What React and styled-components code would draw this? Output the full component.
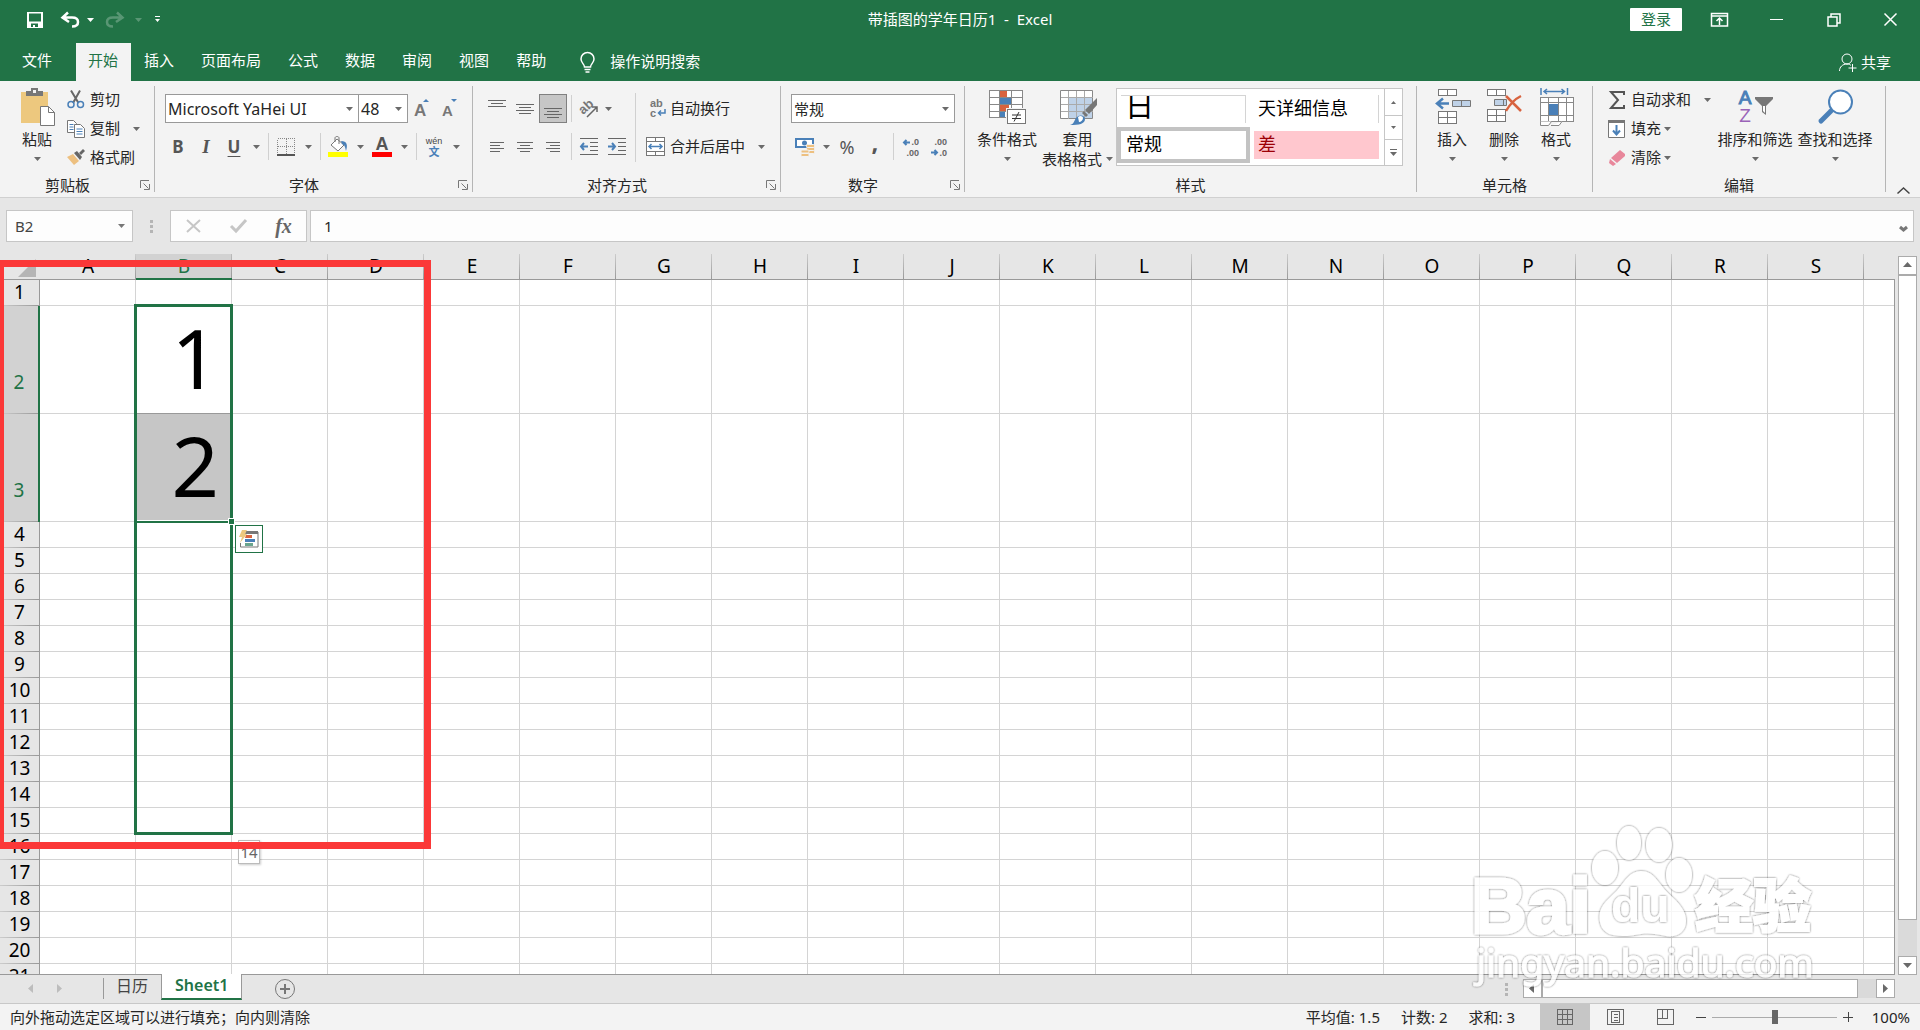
import React from "react";
import styled, { createGlobalStyle, css } from "styled-components";

const GREEN = "#217346";
const FONT = '"Noto Sans", "Noto Sans CJK SC", sans-serif';
const ICON_FONT = '"Liberation Sans", sans-serif';

const GlobalStyle = createGlobalStyle`
  * { box-sizing: border-box; }
  html, body { margin: 0; height: 100%; }
  body { font-family: ${FONT}; font-size: 15px; line-height: 20px; color: #262626; }
  svg { overflow: visible; }
  button, input, select { font: inherit; color: inherit; margin: 0; }
  button { border: 0; padding: 0; background: none; white-space: nowrap; }
`;

const Page = styled.div`
  position: relative;
  display: flex;
  flex-direction: column;
  height: 100vh;
  overflow: hidden;
  background: #e6e6e6;
`;

/* ---------- title bar and tabs ---------- */
const TitleBar = styled.header`
  display: grid;
  grid-template-columns: 1fr auto 1fr;
  height: 43px;
  padding-bottom: 4px;
  align-items: center;
  background: ${GREEN};
  color: #fff;
`;
const Title = styled.span`
  padding-bottom: 2px;
`;
const QuickAccess = styled.div`
  display: flex;
  align-items: center;
  padding-left: 19px;
`;
const QuickButton = styled.button`
  display: flex;
  justify-content: center;
  align-items: center;
  width: ${(p) => p.$w || 32}px;
  height: 32px;
  margin-left: ${(p) => p.$gap || 0}px;
  opacity: ${(p) => (p.disabled ? 0.25 : 1)};
`;
const WindowTools = styled.div`
  display: flex;
  justify-content: flex-end;
  align-items: center;
  padding-right: 1px;
`;
const SignIn = styled.button`
  width: 52px;
  height: 23px;
  margin-right: 9px;
  padding-bottom: 1px;
  border-radius: 1px;
  background: #fff;
  color: ${GREEN};
`;
const WindowButton = styled.button`
  display: grid;
  place-items: center;
  width: 57px;
  height: 36px;
`;
const TabRow = styled.nav`
  display: flex;
  height: 38px;
  background: ${GREEN};
  color: #fff;
`;
const Tab = styled.button`
  padding: 0 14px 4px 13px;
  ${(p) => p.$file && css`padding: 0 24px 4px 22px;`}
  ${(p) =>
    p.$active &&
    css`
      padding: 0 13px 4px 12px;
      background: #f3f3f3;
      color: ${GREEN};
    `}
`;
const TellMe = styled.button`
  display: flex;
  align-items: center;
  gap: 15px;
  margin-left: 20px;
`;
const Share = styled.button`
  display: flex;
  align-items: center;
  gap: 4px;
  margin: 0 29px 0 auto;
`;
const Label = styled.span`
  padding-bottom: 2px;
`;

/* ---------- ribbon ---------- */
const Ribbon = styled.section`
  display: flex;
  height: 117px;
  background: #f3f3f3;
  border-bottom: 1px solid #d0d0d0;
`;
const GroupBox = styled.div`
  display: flex;
  flex-direction: column;
  flex: 0 0 ${(p) => p.$w}px;
  padding-top: 4px;
`;
const GroupBody = styled.div`
  display: flex;
  height: 87px;
  padding-left: ${(p) => p.$left || 0}px;
`;
const GroupFoot = styled.div`
  display: flex;
  align-items: center;
  height: 25px;
`;
const GroupLabel = styled.div`
  flex: 1;
  text-align: center;
`;
const Launcher = styled.button`
  display: grid;
  place-items: center;
  width: 19px;
  height: 20px;
`;
const Divider = styled.div`
  width: 1px;
  margin: 5px 0;
  background: #b5b5b5;
`;
const Collapse = styled.button`
  display: grid;
  place-items: center;
  align-self: flex-end;
  margin: 0 10px 0 auto;
  width: 14px;
  height: 14px;
`;
const BigButton = styled.button`
  display: flex;
  flex-direction: column;
  align-items: center;
  width: ${(p) => p.$w || 52}px;
`;
const BigIcon = styled.span`
  display: grid;
  place-items: center;
  height: 44px;
  padding-left: 2px;
`;
const BigLine = styled.span`
  display: flex;
  align-items: center;
  justify-content: center;
  gap: 4px;
  height: 20px;
`;
const Stack = styled.div`
  display: flex;
  flex-direction: column;
  padding-left: ${(p) => p.$left || 0}px;
  padding-right: ${(p) => p.$right || 0}px;
  padding-top: ${(p) => p.$top || 0}px;
  gap: ${(p) => p.$gap || 0}px;
`;
const Line = styled.div`
  display: flex;
  align-items: center;
  height: 29px;
  padding-left: ${(p) => p.$left || 0}px;
`;
const TextButton = styled.button`
  display: flex;
  align-items: center;
  height: 29px;
  gap: 5px;
`;
const IconSlot = styled.span`
  display: grid;
  place-items: center;
  width: ${(p) => p.$w || 18}px;
`;
const ArrowGap = styled.span`
  display: flex;
  margin-left: ${(p) => p.$gap}px;
`;
const Tool = styled.button`
  display: grid;
  place-items: center;
  width: 28px;
  height: 29px;
  color: #444;
  ${(p) =>
    p.$on &&
    css`
      background: #c6c6c6;
      border: 1px solid #808080;
    `}
`;
const Letter = styled.span`
  font-family: ${(p) => (p.$serif ? '"Liberation Serif", serif' : FONT)};
  font-size: ${(p) => (p.$serif ? 19 : 17)}px;
  line-height: 20px;
  font-weight: 700;
  color: #555;
  font-style: ${(p) => (p.$serif ? "italic" : "normal")};
  text-decoration: ${(p) => (p.$under ? "underline" : "none")};
  text-underline-offset: 3px;
`;
const ArrowTool = styled.button`
  display: grid;
  place-items: center;
  width: ${(p) => p.$w || 16}px;
  height: 29px;
`;
const MiniSep = styled.span`
  width: 1px;
  height: 27px;
  margin: 0 3px 0 4px;
  background: #d0d0d0;
`;
const TallSep = styled.span`
  width: 1px;
  height: 69px;
  margin: 8px 3px 0 4px;
  background: #d0d0d0;
`;
const SelectWrap = styled.label`
  position: relative;
  width: ${(p) => p.$w}px;
  height: 29px;
  margin-left: ${(p) => p.$ml || 0}px;
  svg {
    position: absolute;
    right: 6px;
    top: 13px;
    pointer-events: none;
  }
`;
const Select = styled.select`
  appearance: none;
  width: 100%;
  height: 100%;
  padding: 0 2px;
  border: 1px solid #999;
  border-radius: 0;
  background: #fff;
  font-size: ${(p) => p.$size || 15}px;
`;
const Glyph = styled.span`
  padding-bottom: ${(p) => p.$lift || 0}px;
  font-size: ${(p) => p.$size || 18}px;
  line-height: 20px;
  color: #555;
  font-weight: ${(p) => p.$weight || 400};
`;

/* style gallery */
const Gallery = styled.div`
  display: flex;
  width: 287px;
  height: 78px;
  margin: 3px 0 0 2px;
  border: 1px solid #c6c6c6;
  background: #fff;
`;
const GalleryItems = styled.div`
  display: grid;
  grid-template-columns: 133px 133px;
  grid-template-rows: 36px 36px;
  padding-top: 2px;
`;
const GalleryCell = styled.button`
  display: flex;
  align-items: center;
  margin: ${(p) => (p.$picked ? 0 : 4)}px;
  padding: 0 0 2px ${(p) => (p.$picked ? 5 : 4)}px;
  overflow: hidden;
  color: #000;
  font-size: 18px;
  ${(p) => p.$picked && css`border: 4px solid #c3c3c3;`}
  ${(p) => p.$bad && css`background: #ffc7ce; color: #9c0006;`}
  ${(p) => p.$edge && css`border-right: 1px solid #d4d4d4;`}
  ${(p) =>
    p.$day &&
    css`
      padding-bottom: 8px;
      border-top: 1px solid #d4d4d4;
      font-size: 29px;
      line-height: 20px;
    `}
`;
const GalleryScroll = styled.div`
  display: grid;
  grid-template-rows: 26px 24px 26px;
  width: 18px;
  margin-left: auto;
  border-left: 1px solid #c6c6c6;
  button { display: grid; place-items: center; }
  button + button { border-top: 1px solid #c6c6c6; }
`;

/* ---------- formula bar ---------- */
const FormulaBar = styled.section`
  display: flex;
  height: 56px;
  padding: 12px 6px;
`;
const NameBox = styled.label`
  position: relative;
  width: 127px;
  height: 32px;
  margin-right: 17px;
  svg { position: absolute; right: 8px; top: 14px; }
`;
const NameInput = styled.input`
  width: 100%;
  height: 100%;
  padding: 0 8px;
  border: 1px solid #c6c6c6;
  background: #fdfdfd;
  color: #444;
`;
const Dots = styled.span`
  display: flex;
  flex-direction: column;
  justify-content: center;
  gap: 2px;
  width: 3px;
  i { width: 3px; height: 3px; background: #b5b5b5; }
`;
const FormulaTools = styled.div`
  display: flex;
  align-items: center;
  width: 137px;
  height: 32px;
  margin: 0 3px 0 17px;
  border: 1px solid #c6c6c6;
  background: #fdfdfd;
  button { display: grid; place-items: center; flex: 1; height: 30px; }
`;
const Fx = styled.span`
  font-family: "Liberation Serif", serif;
  font-style: italic;
  font-weight: 700;
  font-size: 20px;
  color: #666;
`;
const FormulaField = styled.div`
  display: flex;
  flex: 1;
  height: 32px;
  border: 1px solid #c6c6c6;
  background: #fdfdfd;
  button { width: 20px; }
`;
const FormulaInput = styled.input`
  flex: 1;
  padding: 0 13px;
  border: 0;
  background: none;
`;

/* ---------- sheet ---------- */
const SheetArea = styled.main`
  display: flex;
  flex: 1;
  min-height: 0;
`;
const Viewport = styled.div`
  position: relative;
  flex: 1;
  min-width: 0;
  overflow: hidden;
  border-bottom: 1px solid #999;
`;
const EdgeLine = styled.span`
  width: 1px;
  margin-top: 25px;
  background: #999;
`;
const Grid = styled.table`
  table-layout: fixed;
  width: 1960px;
  border-collapse: separate;
  border-spacing: 0;
  font-size: 19px;
  line-height: 25px;
  color: #000;
  background: #fff;
`;
const Corner = styled.th`
  width: 40px;
  height: 26px;
  padding: 0;
  background: #e6e6e6;
  border-bottom: 1px solid #999;
  svg { display: block; margin: 4px 0 2px 18px; }
`;
const ColHead = styled.th`
  height: 26px;
  padding: 0;
  font-weight: 400;
  background: linear-gradient(#ccc, #999) right / 1px 100% no-repeat, #e6e6e6;
  border-bottom: 1px solid #999;
  ${(p) =>
    p.$on &&
    css`
      background: linear-gradient(#bbb, #999) right / 1px 100% no-repeat, #d2d2d2;
      border-bottom: 2px solid ${GREEN};
      line-height: 24px;
      color: ${GREEN};
    `}
`;
const RowHead = styled.th`
  height: ${(p) => (p.$tall ? 108 : 26)}px;
  padding: 0 0 2px;
  vertical-align: bottom;
  font-weight: 400;
  line-height: 24px;
  background: linear-gradient(90deg, #ccc, #999) bottom / 100% 1px no-repeat, #e6e6e6;
  border-right: 1px solid #999;
  ${(p) =>
    p.$tall &&
    css`
      padding-bottom: 20px;
      background-color: #d2d2d2;
      border-right: 2px solid ${GREEN};
      color: ${GREEN};
    `}
`;
const Cell = styled.td`
  padding: 0;
  border-right: 1px solid #d4d4d4;
  border-bottom: 1px solid #d4d4d4;
  ${(p) =>
    p.$big &&
    css`
      padding-right: 12px;
      text-align: right;
      vertical-align: top;
      font-size: 83px;
      line-height: 102px;
      border-bottom-color: #999;
    `}
  ${(p) => p.$shade && css`background: #c6c6c6;`}
`;
const FillOutline = styled.div`
  position: absolute;
  left: 134px;
  top: 50px;
  width: 99px;
  height: 531px;
  border: 3px solid ${GREEN};
`;
const SelectionEdge = styled.div`
  position: absolute;
  left: 137px;
  top: 266px;
  width: 91px;
  height: 3px;
  border-top: 1px solid #fff;
  background: ${GREEN};
`;
const FillHandle = styled.div`
  position: absolute;
  left: 228px;
  top: 264px;
  width: 7px;
  height: 7px;
  border: 1px solid #fff;
  background: ${GREEN};
`;
const QuickAnalysis = styled.button`
  position: absolute;
  left: 235px;
  top: 271px;
  display: grid;
  place-items: center;
  width: 28px;
  height: 28px;
  border: 1px solid ${GREEN};
  background: #fff;
`;
const FillTip = styled.div`
  position: absolute;
  left: 238px;
  top: 586px;
  width: 22px;
  height: 24px;
  border: 1px solid #bbb;
  background: #fff;
  box-shadow: 1px 1px 2px rgba(0, 0, 0, 0.2);
  font-size: 15px;
  line-height: 22px;
  text-align: center;
  color: #666;
`;
const RedFrame = styled.div`
  position: absolute;
  left: -3px;
  top: 6px;
  width: 434px;
  height: 589px;
  border: 7px solid #fb3838;
`;
const VScroll = styled.div`
  display: flex;
  flex-direction: column;
  width: 19px;
  margin: 2px 3px 0;
`;
const HScroll = styled.div`
  display: flex;
  width: 372px;
  height: 19px;
  margin: 4px 25px 0 15px;
`;
const ScrollButton = styled.button`
  display: grid;
  place-items: center;
  flex: 0 0 19px;
  border: 1px solid #ababab;
  background: #fff;
`;
const ScrollThumb = styled.div`
  flex: 1;
  border: 1px solid #ababab;
  background: #fff;
`;
const ScrollTrack = styled.div`
  flex: 0 0 ${(p) => p.$size}px;
  background: #dadada;
`;

/* ---------- sheet tabs and status ---------- */
const SheetBar = styled.nav`
  position: relative;
  display: flex;
  height: 28px;
`;
const SheetNav = styled.div`
  display: flex;
  padding: 0 30px 0 17px;
  button { display: grid; place-items: center; width: 28px; height: 26px; }
`;
const SheetSep = styled.span`
  width: 1px;
  height: 21px;
  margin-top: 3px;
  background: #999;
`;
const SheetTab = styled.button`
  height: 25px;
  padding: 0 13px 4px 12px;
  font-size: 16px;
  color: #444;
  ${(p) =>
    p.$active &&
    css`
      height: 26px;
      padding: 0 13px 2px;
      margin-top: -1px;
      background: #fff;
      border: solid #999;
      border-width: 0 1px;
      border-bottom: 2px solid ${GREEN};
      font-weight: 600;
      color: ${GREEN};
    `}
`;
const AddSheet = styled.button`
  display: grid;
  place-items: center;
  width: 22px;
  margin: 0 auto 0 32px;
`;
const StatusBar = styled.footer`
  display: flex;
  align-items: center;
  height: 27px;
  padding: 0 10px;
  background: #f3f3f3;
  border-top: 1px solid #c8c8c8;
`;
const Stats = styled.div`
  display: flex;
  gap: 21px;
  margin: 0 25px 0 auto;
`;
const ViewButton = styled.button`
  display: grid;
  place-items: center;
  width: 50px;
  height: 26px;
  background: ${(p) => (p.$on ? "#c6c6c6" : "none")};
`;
const ZoomButton = styled.button`
  display: grid;
  place-items: center;
  width: 22px;
  height: 26px;
`;
const ZoomRange = styled.input`
  appearance: none;
  width: 125px;
  height: 16px;
  background: linear-gradient(#ababab, #ababab) center / 100% 1px no-repeat;
  &::-webkit-slider-thumb {
    appearance: none;
    width: 6px;
    height: 14px;
    background: #666;
  }
`;
const ZoomValue = styled.span`
  margin-left: auto;
`;
const ZoomBox = styled.div`
  display: flex;
  align-items: center;
  width: 220px;
`;
const Watermark = styled.svg`
  position: absolute;
  right: 94px;
  bottom: 38px;
  pointer-events: none;
`;

/* ---------- drawings ---------- */
const Down = ({ c = "#6a6a6a" }) => (
  <svg width="7" height="4" viewBox="0 0 7 4"><path d="M0 0h7L3.500 4z" fill={c} /></svg>
);
const Tri = ({ dir, c = "#6a6a6a" }) => {
  const d = { up: "M0 6h9L4.500 1z", down: "M0 2h9L4.500 7z", left: "M6 0v9L1 4.500z", right: "M2 0v9L7 4.500z" }[dir];
  return <svg width="9" height="9" viewBox="0 0 9 9"><path d={d} fill={c} /></svg>;
};
const Lines = ({ rows }) => (
  <svg width="20" height="20" viewBox="0 0 20 20" shapeRendering="crispEdges">
    {rows.map(([x, y, w]) => <rect key={y} x={x} y={y} width={w} height="1" fill="#666" />)}
  </svg>
);
const SaveIcon = () => (
  <svg width="16" height="16" viewBox="0 0 16 16"><path fill="#fff" fillRule="evenodd" d="M0 0h16v16H0zM2 1.500v8h12v-8zM4 11.500V15h2v-2h2v2h3v-3.500z" /></svg>
);
const UndoIcon = ({ flip }) => (
  <svg width="19" height="16" viewBox="0 0 19 16">
    <path d="M7 0.500L1.500 5.500 8 10M2 5.500h9c4 0 6 2 6 4.500S15 14.500 11 14.500" fill="none" stroke="#fff" strokeWidth="2.500" transform={flip ? "matrix(-1 0 0 1 19 0)" : undefined} />
  </svg>
);
const PasteIcon = () => (
  <svg width="36" height="40" viewBox="0 0 36 40">
    <path d="M1 5h27v31H1z" fill="#edc87e" />
    <path d="M6 9V4h5V1h7v3h5v5z" fill="#777" /><path d="M13 3h3v3h-3z" fill="#f3f3f3" />
    <path d="M20.500 19.500h8l6 6v13h-14z" fill="#fff" stroke="#777" /><path d="M28.500 19.500v6h6" fill="none" stroke="#777" />
  </svg>
);
const CutIcon = () => (
  <svg width="18" height="19" viewBox="0 0 18 19" fill="none">
    <path d="M4 0.500L11.500 13M13 0.500L6 13" stroke="#666" strokeWidth="2" />
    <circle cx="4" cy="14.500" r="3" stroke="#4a80b8" strokeWidth="1.500" /><circle cx="13.500" cy="14.500" r="3" stroke="#4a80b8" strokeWidth="1.500" />
  </svg>
);
const CopyIcon = () => (
  <svg width="18" height="18" viewBox="0 0 18 18" fill="#fff" stroke="#777">
    <path d="M.5.500h6l3 3v9h-9z" /><path d="M2.500 4.500h4M2.500 7h4M2.500 9.500h4" stroke="#4a80b8" />
    <path d="M7.500 4.500h6l4 4v9h-10z" /><path d="M9.500 9h6M9.500 11.500h6M9.500 14h6" stroke="#4a80b8" />
  </svg>
);
const BrushIcon = () => (
  <svg width="18" height="17" viewBox="0 0 18 17">
    <path d="M0 8l6-3 6 7-5 4z" fill="#edc080" /><path d="M7 4l3-2 5 6-2 3z" fill="#666" /><path d="M12 4l4-4 2 2-4 4z" fill="#666" />
  </svg>
);
const LaunchIcon = () => (
  <svg width="10" height="10" viewBox="0 0 10 10" fill="none" stroke="#777"><path d="M.5 8V.5H9M3.500 3.500l5 5M9.500 4v5.500H4" /></svg>
);
const SizeIcon = ({ up }) => (
  <svg width="16" height="22" viewBox="0 0 16 22">
    <text x="0" y="18" fontFamily={ICON_FONT} fontSize={up ? 17 : 15} fontWeight="700" fill="#777">A</text>
    <path d={up ? "M9 4h6L12 1z" : "M9 1h6l-3 3z"} fill="#4a80b8" />
  </svg>
);
const BorderIcon = () => (
  <svg width="18" height="18" viewBox="0 0 18 18" fill="none" shapeRendering="crispEdges">
    <path d="M.5.500h17v16H.5zM9 .5v16M.5 8.500h17" stroke="#888" strokeDasharray="1 1" /><path d="M0 17h18" stroke="#555" strokeWidth="1.500" />
  </svg>
);
const BucketIcon = () => (
  <svg width="20" height="21" viewBox="0 0 20 21">
    <path d="M9 3l7 6-6 6-7-6z" fill="#fff" stroke="#777" /><path d="M7 6V2c0-2 4-2 4 0v6" fill="none" stroke="#777" />
    <path d="M13 5c6 0 7 4 5 10-1-4-1-6-4-7z" fill="#4a80b8" /><rect y="16" width="20" height="5" fill="#ff0" />
  </svg>
);
const FontColorIcon = () => (
  <svg width="20" height="21" viewBox="0 0 20 21">
    <text x="10" y="14" textAnchor="middle" fontFamily={ICON_FONT} fontSize="18" fontWeight="700" fill="#555">A</text><rect y="16" width="20" height="5" fill="red" />
  </svg>
);
const PhoneticIcon = () => (
  <svg width="20" height="20" viewBox="0 0 20 20">
    <text x="10" y="7" textAnchor="middle" fontFamily={ICON_FONT} fontSize="9" fill="#444">wén</text>
    <text x="10" y="19" textAnchor="middle" fontSize="11" fontWeight="700" fill="#4a80b8">文</text>
  </svg>
);
const OrientIcon = () => (
  <svg width="20" height="18" viewBox="0 0 20 18">
    <text x="1" y="13" fontFamily={ICON_FONT} fontSize="13" fontWeight="700" fill="#777" transform="rotate(-42 5 10)">ab</text>
    <path d="M8 17L18 7M13 7h5v5" fill="none" stroke="#666" strokeWidth="1.500" />
  </svg>
);
const IndentIcon = ({ out }) => (
  <svg width="18" height="17" viewBox="0 0 18 17">
    <path d="M0 .5h18M10 4.500h8M10 8.500h8M10 12.500h8M0 16.500h18" stroke="#666" fill="none" shapeRendering="crispEdges" />
    <path d={out ? "M8 8.500H1M4 5L1 8.500 4 12" : "M0 8.500h7M4 5l3 3.500L4 12"} stroke="#4a80b8" strokeWidth="2" fill="none" />
  </svg>
);
const WrapIcon = () => (
  <svg width="18" height="19" viewBox="0 0 18 19" fontFamily={ICON_FONT} fontSize="11" fontWeight="700">
    <text x="3" y="8" fill="#777">ab</text><text x="3" y="18" fill="#777">c</text>
    <path d="M18 10v4h-6M14 11.500L11.500 14l2.500 2.500" fill="none" stroke="#4a80b8" strokeWidth="1.500" />
  </svg>
);
const MergeIcon = () => (
  <svg width="19" height="19" viewBox="0 0 19 19" fill="#fff" stroke="#777">
    <path d="M.5.500h18v18H.5zM.5 4.500h18M.5 14.500h18M9.500.5v4M9.500 14.500v4" shapeRendering="crispEdges" />
    <path d="M3 9.500h13M5.500 7L3 9.500 5.500 12M13.500 7L16 9.500 13.500 12" fill="none" stroke="#4a80b8" strokeWidth="1.500" />
  </svg>
);
const CurrencyIcon = () => (
  <svg width="20" height="20" viewBox="0 0 20 20">
    <path d="M0 1h19v10H0z" fill="#4a80b8" /><path d="M2 3h15v6H2z" fill="#fff" /><circle cx="9.500" cy="6" r="2.500" fill="#4a80b8" />
    <g fill="#edc080" stroke="#f3f3f3"><rect x="11.500" y="7.500" width="8" height="3" rx="1" /><rect x="11.500" y="10.500" width="8" height="3" rx="1" /><rect x="11.500" y="13.500" width="8" height="3" rx="1" /><rect x="6" y="13" width="8" height="3" rx="1" /><rect x="6" y="16.500" width="8" height="3" rx="1" /></g>
  </svg>
);
const DecimalIcon = ({ more }) => (
  <svg width="18" height="18" viewBox="0 0 18 18" fontFamily={ICON_FONT} fontSize="9" fontWeight="700" fill="#666" textAnchor="end">
    <text x="17" y="7">{more ? ".0" : ".00"}</text>
    <text x="17" y="18">{more ? ".00" : ".0"}</text>
    <path d={more ? "M8 4.500H2M4.500 2L2 4.500 4.500 7" : "M1 14.500h6M4.500 12L7 14.500 4.500 17"} fill="none" stroke="#4a80b8" strokeWidth="2" />
  </svg>
);
const CondIcon = () => (
  <svg width="38" height="35" viewBox="0 0 38 35" shapeRendering="crispEdges">
    <path d="M.5.500h33v27H.5zM.5 7.500h33M.5 14.500h33M.5 21.500h33M10.500.5v27M22.500.5v27" fill="#fff" stroke="#888" />
    <path d="M11 1h7v6h-7zM11 15h9v6h-9z" fill="#d8633f" /><path d="M11 8h11v6H11zM11 22h5v5h-5z" fill="#4a80b8" />
    <path d="M17 18h21v17H17z" fill="#f3f3f3" /><path d="M18.500 19.500h18v14h-18z" fill="#fff" stroke="#777" />
    <path d="M23 25h9M23 28.500h9M30 22l-5 9.500" stroke="#333" shapeRendering="auto" />
  </svg>
);
const TableIcon = () => (
  <svg width="38" height="35" viewBox="0 0 38 35">
    <path d="M.5.500h32v28H.5z" fill="#fff" stroke="#888" /><path d="M9 8h23v20H9z" fill="#bfd2e8" />
    <path d="M.5 7.500h32M.5 14.500h32M.5 21.500h32M8.500.5v28M16.500.5v28M24.500.5v28" stroke="#aaa" fill="none" shapeRendering="crispEdges" />
    <path d="M37 8v7l-8 9-4-4z" fill="#777" /><path d="M24 21l4 4-2 2-4-4z" fill="#777" />
    <path d="M10 35c4-1 4-4 6-7 3-4 9-3 9 1 0 5-6 6-15 6z" fill="#4a80b8" /><path d="M18 27c2-2 5-1 5 1s-2 4-4 4z" fill="#fff" />
  </svg>
);
const InsertIcon = () => (
  <svg width="37" height="36" viewBox="0 0 37 36" fill="#fff" stroke="#777">
    <path d="M3.500.5h18v6h-18zM12.500.5v6M3.500 22.500h18v12h-18zM12.500 22.500v12M3.500 28.500h18" shapeRendering="crispEdges" />
    <path d="M17.500 11.500h18v6h-18zM26.500 11.500v6" fill="#bfd2e8" /><path d="M14 14.500H2M8 9.500l-6 5 6 5" fill="none" stroke="#4a80b8" strokeWidth="2.500" />
  </svg>
);
const DeleteIcon = () => (
  <svg width="36" height="36" viewBox="0 0 36 36" fill="#fff" stroke="#777">
    <path d="M.5.500h18v6H.5zM9.500.5v6M.5 20.500h18v12H.5zM9.500 20.500v12M.5 26.500h18" shapeRendering="crispEdges" />
    <path d="M7.500 10.500h12v6h-12zM16.500 10.500v6" fill="#bfd2e8" /><path d="M19 7l15 15M34 7c-6 3-11 8-15 15" fill="none" stroke="#d8633f" strokeWidth="2.500" />
  </svg>
);
const FormatIcon = () => (
  <svg width="35" height="38" viewBox="0 0 35 38" fill="#fff" stroke="#888">
    <path d="M.5 9.500h33v24H.5zM.5 14.500h33M.5 27.500h33M8.500 9.500v24M18.500 9.500v24M26.500 9.500v24" shapeRendering="crispEdges" />
    <path d="M9 16h9v11H9z" fill="#4a80b8" stroke="none" /><path d="M.5 33.500v4h8l3-4M11 37.500h8l3-4" fill="#fff" />
    <path d="M1 0v7M27.500 0v7M4 3.500h20M7 1L4 3.500 7 6M21.500 1l3 2.500-3 2.500" fill="none" stroke="#4a80b8" strokeWidth="1.500" />
  </svg>
);
const SumIcon = () => (
  <svg width="16" height="18" viewBox="0 0 16 18"><path d="M15 4V1H2l7 8-7 8h13v-3" fill="none" stroke="#555" strokeWidth="2" /></svg>
);
const FillIcon = () => (
  <svg width="18" height="18" viewBox="0 0 18 18"><path d="M.5.500h16v17H.5z" fill="#fff" stroke="#777" /><path d="M0 0h17v3H0z" fill="#777" /><path d="M8.500 5v9M5 10.500l3.500 4 3.500-4" fill="none" stroke="#4a80b8" strokeWidth="2" /></svg>
);
const EraserIcon = () => (
  <svg width="17" height="16" viewBox="0 0 17 16"><path d="M11 0l5 4v2l-8 7-6-5z" fill="#e8879b" /><path d="M1 9l6 5-3 2-4-3z" fill="#e8879b" /></svg>
);
const SortIcon = () => (
  <svg width="36" height="36" viewBox="0 0 36 36" fontFamily={ICON_FONT} fontSize="19" textAnchor="middle">
    <text x="7" y="15" fill="#4a80b8" stroke="#4a80b8">A</text>
    <text x="7" y="33" fill="#9a63b8">Z</text>
    <path d="M17 8h18v2l-7 7v9l-4-3v-6l-7-7z" fill="#777" /><path d="M25 17h2v7l-2-2z" fill="#fff" />
  </svg>
);
const FindIcon = () => (
  <svg width="36" height="36" viewBox="0 0 36 36"><path d="M13 22L3 32" stroke="#4a80b8" strokeWidth="5" strokeLinecap="round" /><circle cx="22.500" cy="13" r="11.500" fill="#fff" stroke="#4a80b8" strokeWidth="2" /></svg>
);
const PawMark = () => (
  <Watermark width="354" height="176" viewBox="0 0 354 176" aria-hidden="true">
    <defs>
      <filter id="glow" x="-10%" y="-10%" width="120%" height="120%">
        <feDropShadow dx="0" dy="0" stdDeviation="1" floodColor="#000" floodOpacity="0.750" />
      </filter>
    </defs>
    <g fill="#fff" opacity="0.800" filter="url(#glow)">
      <text x="-1" y="117" fontFamily="Liberation Sans, sans-serif" fontWeight="700" fontSize="77" stroke="#fff" strokeWidth="3">Bai</text>
      <ellipse cx="133" cy="52" rx="13" ry="17" /><ellipse cx="157" cy="27" rx="12" ry="17" />
      <ellipse cx="187" cy="29" rx="13" ry="17" /><ellipse cx="207" cy="59" rx="13" ry="17" />
      <path d="M169 55c13 0 17 12 27 22 12 11 18 18 18 28 0 11-9 17-20 15-9-2-17-3-25-2-11 2-19 3-28 1-11-2-15-12-13-23 3-11 13-16 19-24 6-7 11-17 22-17z" />
      <text x="223" y="111" fontFamily="Noto Sans CJK SC, sans-serif" fontWeight="900" fontSize="58" stroke="#fff" strokeWidth="2">经验</text>
      <text x="4" y="161" fontFamily={FONT} fontSize="39" stroke="#fff">jingyan.baidu.com</text>
    </g>
    <text x="139" y="106" fontFamily="Liberation Sans, sans-serif" fontWeight="700" fontSize="48" fill="#fff" opacity="0.800" filter="url(#glow)">du</text>
  </Watermark>
);

/* ---------- pieces ---------- */
const Group = ({ w, left, label, launch, children }) => (
  <>
    <GroupBox $w={w}>
      <GroupBody $left={left}>{children}</GroupBody>
      <GroupFoot>
        <GroupLabel>{label}</GroupLabel>
        {launch && <Launcher aria-label={label + "设置"}><LaunchIcon /></Launcher>}
      </GroupFoot>
    </GroupBox>
    <Divider />
  </>
);
const Big = ({ w, icon, text, second }) => (
  <BigButton $w={w}>
    <BigIcon>{icon}</BigIcon>
    <BigLine>{text}</BigLine>
    <BigLine>{second}<Down /></BigLine>
  </BigButton>
);
const Small = ({ icon, text, slot, arrow }) => (
  <TextButton>
    <IconSlot $w={slot}>{icon}</IconSlot>
    <Label>{text}</Label>
    {arrow !== undefined && <ArrowGap $gap={arrow}><Down /></ArrowGap>}
  </TextButton>
);
const Arrow = ({ w, label }) => <ArrowTool $w={w} aria-label={label}><Down /></ArrowTool>;
const Handle = () => <Dots><i /><i /><i /></Dots>;

const TABS = ["插入", "页面布局", "公式", "数据", "审阅", "视图", "帮助"];
const COLUMNS = "ABCDEFGHIJKLMNOPQRST".split("");
const ROWS = Array.from({ length: 21 }, (_, i) => i + 1);
const VALUES = { B2: "1", B3: "2" };

export default function App() {
  return (
    <Page>
      <GlobalStyle />
      <TitleBar>
        <QuickAccess>
          <QuickButton aria-label="保存"><SaveIcon /></QuickButton>
          <QuickButton $gap={3} aria-label="撤消"><UndoIcon /></QuickButton>
          <QuickButton $w={8} aria-label="撤消列表"><Down c="#fff" /></QuickButton>
          <QuickButton $gap={4} disabled aria-label="恢复"><UndoIcon flip /></QuickButton>
          <QuickButton $gap={4} $w={8} disabled aria-label="恢复列表"><Down c="#fff" /></QuickButton>
          <QuickButton $gap={11} $w={8} aria-label="自定义">
            <svg width="5" height="7" viewBox="0 0 5 7"><path d="M0 0h5v1H0zM0 3h5L2.500 6z" fill="#fff" /></svg>
          </QuickButton>
        </QuickAccess>
        <Title>带插图的学年日历1 &nbsp;- &nbsp;Excel</Title>
        <WindowTools>
          <SignIn>登录</SignIn>
          <WindowButton aria-label="功能区显示选项">
            <svg width="17" height="14" viewBox="0 0 17 14" fill="none" stroke="#fff"><path d="M.5.500h16v12.500H.5zM.5 3h16M8.500 12V5.500M5.500 8l3-3 3 3" strokeWidth="1.500" /></svg>
          </WindowButton>
          <WindowButton aria-label="最小化"><svg width="13" height="2"><rect width="13" height="1" fill="#fff" /></svg></WindowButton>
          <WindowButton aria-label="还原">
            <svg width="14" height="14" viewBox="0 0 14 14" fill="none" stroke="#fff" strokeWidth="1.500"><path d="M1 4h9v9H1zM4 4V1h9v9h-3" /></svg>
          </WindowButton>
          <WindowButton aria-label="关闭">
            <svg width="13" height="13" viewBox="0 0 13 13" stroke="#fff" strokeWidth="1.500"><path d="M.5.500l12 12M12.500.500l-12 12" /></svg>
          </WindowButton>
        </WindowTools>
      </TitleBar>
      <TabRow>
        <Tab $file>文件</Tab>
        <Tab $active>开始</Tab>
        {TABS.map((t) => <Tab key={t}>{t}</Tab>)}
        <TellMe>
          <svg width="15" height="21" viewBox="0 0 15 21" fill="none" stroke="#fff" strokeWidth="1.500">
            <path d="M4.500 15c0-3-3.500-4-3.500-8a6.500 6.500 0 0113 0c0 4-3.500 5-3.500 8zM4.500 17.500h6M5.500 20h4" />
          </svg>
          <Label>操作说明搜索</Label>
        </TellMe>
        <Share>
          <svg width="18" height="19" viewBox="0 0 18 19" fill="none" stroke="#fff"><circle cx="8" cy="6" r="5" /><path d="M.5 18c0-4 3-7 7.500-7 2 0 3 .5 4 1.500M13.500 11v8M9.500 15h8" /></svg>
          共享
        </Share>
      </TabRow>

      <Ribbon>
        <Group w={154} left={12} label="剪贴板" launch>
          <Big w={50} icon={<PasteIcon />} text="粘贴" />
          <Stack $left={5}>
            <Small icon={<CutIcon />} text="剪切" />
            <Small icon={<CopyIcon />} text="复制" arrow={8} />
            <Small icon={<BrushIcon />} text="格式刷" />
          </Stack>
        </Group>

        <Group w={317} left={9} label="字体" launch>
          <Stack $top={9} $gap={9}>
            <Line $left={1}>
              <SelectWrap $w={194}>
                <Select $size={16} aria-label="字体" defaultValue="y"><option value="y">Microsoft YaHei UI</option></Select><Down />
              </SelectWrap>
              <SelectWrap $w={50} $ml={-1}>
                <Select $size={16} aria-label="字号" defaultValue="48"><option>48</option></Select><Down />
              </SelectWrap>
              <Tool aria-label="增大字号"><SizeIcon up /></Tool>
              <Tool aria-label="减小字号"><SizeIcon /></Tool>
            </Line>
            <Line>
              <Tool><Letter>B</Letter></Tool>
              <Tool><Letter $serif>I</Letter></Tool>
              <Tool><Letter $under>U</Letter></Tool>
              <Arrow label="下划线" /><MiniSep />
              <Tool aria-label="边框"><BorderIcon /></Tool><Arrow label="边框列表" /><MiniSep />
              <Tool aria-label="填充颜色"><BucketIcon /></Tool><Arrow label="填充颜色列表" />
              <Tool aria-label="字体颜色"><FontColorIcon /></Tool><Arrow label="字体颜色列表" /><MiniSep />
              <Tool aria-label="拼音"><PhoneticIcon /></Tool><Arrow label="拼音列表" />
            </Line>
          </Stack>
        </Group>

        <Group w={307} left={10} label="对齐方式" launch>
          <Stack $top={9} $gap={9}>
            <Line>
              <Tool aria-label="顶端对齐"><Lines rows={[[1, 1, 18], [4, 4, 12], [1, 7, 18]]} /></Tool>
              <Tool aria-label="垂直居中"><Lines rows={[[1, 5, 18], [4, 8, 12], [1, 11, 18], [4, 14, 12]]} /></Tool>
              <Tool $on aria-label="底端对齐"><Lines rows={[[1, 9, 18], [4, 12, 12], [1, 15, 18], [4, 18, 12]]} /></Tool>
              <MiniSep />
              <Tool aria-label="方向"><OrientIcon /></Tool><Arrow w={10} label="方向列表" />
            </Line>
            <Line>
              <Tool aria-label="左对齐"><Lines rows={[[3, 5, 14], [3, 8, 10], [3, 11, 14], [3, 14, 10]]} /></Tool>
              <Tool aria-label="居中"><Lines rows={[[2, 5, 16], [5, 8, 10], [2, 11, 16], [5, 14, 10]]} /></Tool>
              <Tool aria-label="右对齐"><Lines rows={[[3, 5, 14], [7, 8, 10], [3, 11, 14], [7, 14, 10]]} /></Tool>
              <MiniSep />
              <Tool aria-label="减少缩进"><IndentIcon out /></Tool>
              <Tool aria-label="增加缩进"><IndentIcon /></Tool>
            </Line>
          </Stack>
          <TallSep />
          <Stack $top={9} $gap={9} $left={7}>
            <Small slot={19} icon={<WrapIcon />} text="自动换行" />
            <Small slot={19} icon={<MergeIcon />} text="合并后居中" arrow={8} />
          </Stack>
        </Group>

        <Group w={183} left={10} label="数字" launch>
          <Stack $top={9} $gap={9}>
            <SelectWrap $w={164}>
              <Select aria-label="数字格式" defaultValue="常规"><option>常规</option></Select><Down />
            </SelectWrap>
            <Line>
              <Tool aria-label="会计格式"><CurrencyIcon /></Tool><Arrow w={14} label="会计格式列表" />
              <Tool><Glyph>%</Glyph></Tool>
              <Tool><Glyph $size={24} $weight={700} $lift={12}>,</Glyph></Tool>
              <MiniSep />
              <Tool aria-label="增加小数位"><DecimalIcon more /></Tool>
              <Tool aria-label="减少小数位"><DecimalIcon /></Tool>
            </Line>
          </Stack>
        </Group>

        <Group w={451} left={8} label="样式">
          <Big w={68} icon={<CondIcon />} text="条件格式" />
          <Big w={73} icon={<TableIcon />} text="套用" second="表格格式" />
          <Gallery>
            <GalleryItems>
              <GalleryCell $day $edge>日</GalleryCell>
              <GalleryCell $edge>天详细信息</GalleryCell>
              <GalleryCell $picked>常规</GalleryCell>
              <GalleryCell $bad>差</GalleryCell>
            </GalleryItems>
            <GalleryScroll>
              <button aria-label="上一行"><svg width="5" height="3"><path d="M0 3h5L2.500 0z" fill="#6a6a6a" /></svg></button>
              <button aria-label="下一行"><svg width="5" height="3"><path d="M0 0h5L2.500 3z" fill="#6a6a6a" /></svg></button>
              <button aria-label="其他样式"><svg width="7" height="7"><path d="M0 0h7v1H0zM0 3h7L3.500 7z" fill="#6a6a6a" /></svg></button>
            </GalleryScroll>
          </Gallery>
        </Group>

        <Group w={175} left={9} label="单元格">
          <Big icon={<InsertIcon />} text="插入" />
          <Big icon={<DeleteIcon />} text="删除" />
          <Big icon={<FormatIcon />} text="格式" />
        </Group>

        <Group w={292} left={15} label="编辑">
          <Stack $right={4}>
            <Small icon={<SumIcon />} text="自动求和" arrow={8} />
            <Small icon={<FillIcon />} text="填充" arrow={-2} />
            <Small icon={<EraserIcon />} text="清除" arrow={-2} />
          </Stack>
          <Big w={80} icon={<SortIcon />} text="排序和筛选" />
          <Big w={80} icon={<FindIcon />} text="查找和选择" />
        </Group>
        <Collapse aria-label="折叠功能区">
          <svg width="13" height="7" viewBox="0 0 13 7" fill="none" stroke="#444" strokeWidth="1.500"><path d="M.5 6.500l6-5.500 6 5.500" /></svg>
        </Collapse>
      </Ribbon>

      <FormulaBar>
        <NameBox><NameInput aria-label="名称框" defaultValue="B2" /><Down c="#777" /></NameBox>
        <Handle />
        <FormulaTools>
          <button aria-label="取消"><svg width="15" height="14" viewBox="0 0 15 14" stroke="#c6c6c6" strokeWidth="2"><path d="M1 1l13 12M14 1L1 13" /></svg></button>
          <button aria-label="输入"><svg width="17" height="14" viewBox="0 0 17 14" fill="none" stroke="#c6c6c6" strokeWidth="3"><path d="M1 7l5 5L16 1" /></svg></button>
          <button><Fx>fx</Fx></button>
        </FormulaTools>
        <FormulaField>
          <FormulaInput aria-label="编辑栏" defaultValue="1" />
          <button aria-label="展开编辑栏"><svg width="9" height="6" viewBox="0 0 9 6" fill="none" stroke="#777" strokeWidth="3"><path d="M1 1l3.500 3L8 1" /></svg></button>
        </FormulaField>
      </FormulaBar>

      <SheetArea>
        <Viewport>
          <Grid>
            <thead>
              <tr>
                <Corner aria-label="全选"><svg width="18" height="18" viewBox="0 0 18 18"><path d="M18 0v18H0z" fill="#b5b5b5" /></svg></Corner>
                {COLUMNS.map((c) => <ColHead key={c} scope="col" $on={c === "B"}>{c}</ColHead>)}
              </tr>
            </thead>
            <tbody>
              {ROWS.map((r) => {
                const tall = r === 2 || r === 3;
                return (
                  <tr key={r}>
                    <RowHead scope="row" $tall={tall}>{r}</RowHead>
                    {COLUMNS.map((c) => (
                      <Cell key={c} $big={!!VALUES[c + r]} $shade={c + r === "B3"}>{VALUES[c + r]}</Cell>
                    ))}
                  </tr>
                );
              })}
            </tbody>
          </Grid>
          <FillOutline />
          <SelectionEdge />
          <FillHandle />
          <QuickAnalysis aria-label="快速分析">
            <svg width="20" height="18" viewBox="0 0 20 18">
              <path d="M6 2h13v15H1.500v-4" fill="none" stroke="#777" /><path d="M7 1h12v3H6z" fill="#777" />
              <path d="M7 5h6v3H6z" fill="#d8633f" /><path d="M6 9h10v3H6z" fill="#4a80b8" /><path d="M6 13h8v3H6z" fill="#6aa58e" />
              <path d="M3 0h5L6 4h2L1 13l2-6H0z" fill="#edc87e" />
            </svg>
          </QuickAnalysis>
          <FillTip>14</FillTip>
          <RedFrame />
        </Viewport>
        <EdgeLine />
        <VScroll>
          <ScrollButton aria-label="向上"><Tri dir="up" /></ScrollButton>
          <ScrollThumb />
          <ScrollTrack $size={36} />
          <ScrollButton aria-label="向下"><Tri dir="down" /></ScrollButton>
        </VScroll>
      </SheetArea>

      <SheetBar>
        <SheetNav>
          <button aria-label="上一个工作表"><Tri dir="left" c="#bdbdbd" /></button>
          <button aria-label="下一个工作表"><Tri dir="right" c="#bdbdbd" /></button>
        </SheetNav>
        <SheetSep />
        <SheetTab>日历</SheetTab>
        <SheetTab $active>Sheet1</SheetTab>
        <AddSheet aria-label="新工作表">
          <svg width="20" height="20" viewBox="0 0 20 20" fill="none" stroke="#777"><circle cx="10" cy="10" r="9.500" /><path d="M10 5v10M5 10h10" strokeWidth="2" /></svg>
        </AddSheet>
        <Handle />
        <HScroll>
          <ScrollButton aria-label="向左"><Tri dir="left" /></ScrollButton>
          <ScrollThumb />
          <ScrollTrack $size={18} />
          <ScrollButton aria-label="向右"><Tri dir="right" /></ScrollButton>
        </HScroll>
      </SheetBar>

      <StatusBar>
        <span>向外拖动选定区域可以进行填充；向内则清除</span>
        <Stats><span>平均值: 1.5</span><span>计数: 2</span><span>求和: 3</span></Stats>
        <ViewButton $on aria-label="普通">
          <svg width="16" height="16" viewBox="0 0 16 16" fill="none" stroke="#666" shapeRendering="crispEdges"><path d="M.5.500h15v15H.5zM5.500.5v15M10.500.5v15M.5 5.500h15M.5 10.500h15" /></svg>
        </ViewButton>
        <ViewButton aria-label="页面布局">
          <svg width="17" height="16" viewBox="0 0 17 16" fill="none" stroke="#666" shapeRendering="crispEdges"><path d="M.5.500h16v15H.5zM4.500 2.500h8v11h-8zM6.500 5.500h4M6.500 8.500h4M6.500 11.500h4" /></svg>
        </ViewButton>
        <ViewButton aria-label="分页预览">
          <svg width="17" height="16" viewBox="0 0 17 16" fill="none" stroke="#666" shapeRendering="crispEdges"><path d="M.5.500h16v15H.5zM.5 9.500h10v-9M5.500.5v9" /></svg>
        </ViewButton>
        <ZoomBox>
          <ZoomButton aria-label="缩小"><svg width="10" height="1"><rect width="10" height="1" fill="#444" /></svg></ZoomButton>
          <ZoomRange type="range" aria-label="缩放" min="10" max="190" defaultValue="100" />
          <ZoomButton aria-label="放大"><svg width="10" height="10" stroke="#444"><path d="M5.500 0v10M0 5.500h10" /></svg></ZoomButton>
          <ZoomValue>100%</ZoomValue>
        </ZoomBox>
      </StatusBar>
      <PawMark />
    </Page>
  );
}
